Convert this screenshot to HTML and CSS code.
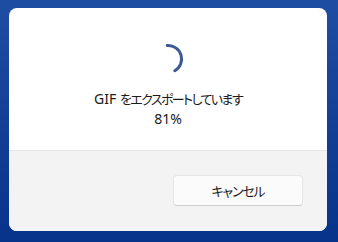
FILE: index.html
```html
<!DOCTYPE html>
<html lang="ja">
<head>
<meta charset="utf-8">
<link rel="stylesheet" href="styles.css">
</head>
<body>
<div class="dialog">
  <div class="content">
    <svg class="spinner" width="32" height="32" viewBox="0 0 32 32">
      <path d="M15.2 2.5 A13.5 13.5 0 0 1 22.8 27.7" fill="none" stroke="#3d5797" stroke-width="3" stroke-linecap="round"/>
    </svg>
    <div class="msg">GIF <span class="kana">をエクスポートしています</span></div>
    <div class="pct">81%</div>
  </div>
  <div class="footer">
    <button class="btn"><span class="kana">キャンセル</span></button>
  </div>
</div>
</body>
</html>
```
FILE: styles.css
```css
html, body {
  margin: 0;
  height: 100%;
}
body {
  background: linear-gradient(180deg, #1e4ea4 0%, #143f96 50%, #07338a 100%);
  padding: 8px 11px 11px 9px;
  box-sizing: border-box;
  font-family: "Noto Sans", "Noto Sans CJK JP", sans-serif;
  font-feature-settings: "palt";
  color: #1b1b1b;
}
.dialog {
  width: 318px;
  height: 223px;
  background: #ffffff;
  border-radius: 8px;
  overflow: hidden;
  display: flex;
  flex-direction: column;
}
.content {
  height: 142px;
  display: flex;
  flex-direction: column;
  align-items: center;
  box-sizing: border-box;
  padding-top: 35px;
}
.spinner {
  display: block;
  margin-bottom: 14px;
}
.msg, .pct {
  font-size: 14px;
  line-height: 19px;
}
.kana {
  font-size: 13px;
  letter-spacing: -1.6px;
}
.footer {
  flex: 1;
  background: #f3f3f3;
  border-top: 1px solid #e5e5e5;
  display: flex;
  justify-content: flex-end;
  align-items: flex-start;
  padding: 24px 24px 0 0;
}
.btn {
  width: 130px;
  height: 31px;
  background: #fbfbfb;
  border: 1px solid #e5e5e5;
  border-bottom-color: #cccccc;
  border-radius: 4px;
  font-family: "Noto Sans", "Noto Sans CJK JP", sans-serif;
  font-feature-settings: "palt";
  font-size: 14px;
  color: #1b1b1b;
  padding: 0;
}
.btn .kana {
  letter-spacing: -1.2px;
}
```
